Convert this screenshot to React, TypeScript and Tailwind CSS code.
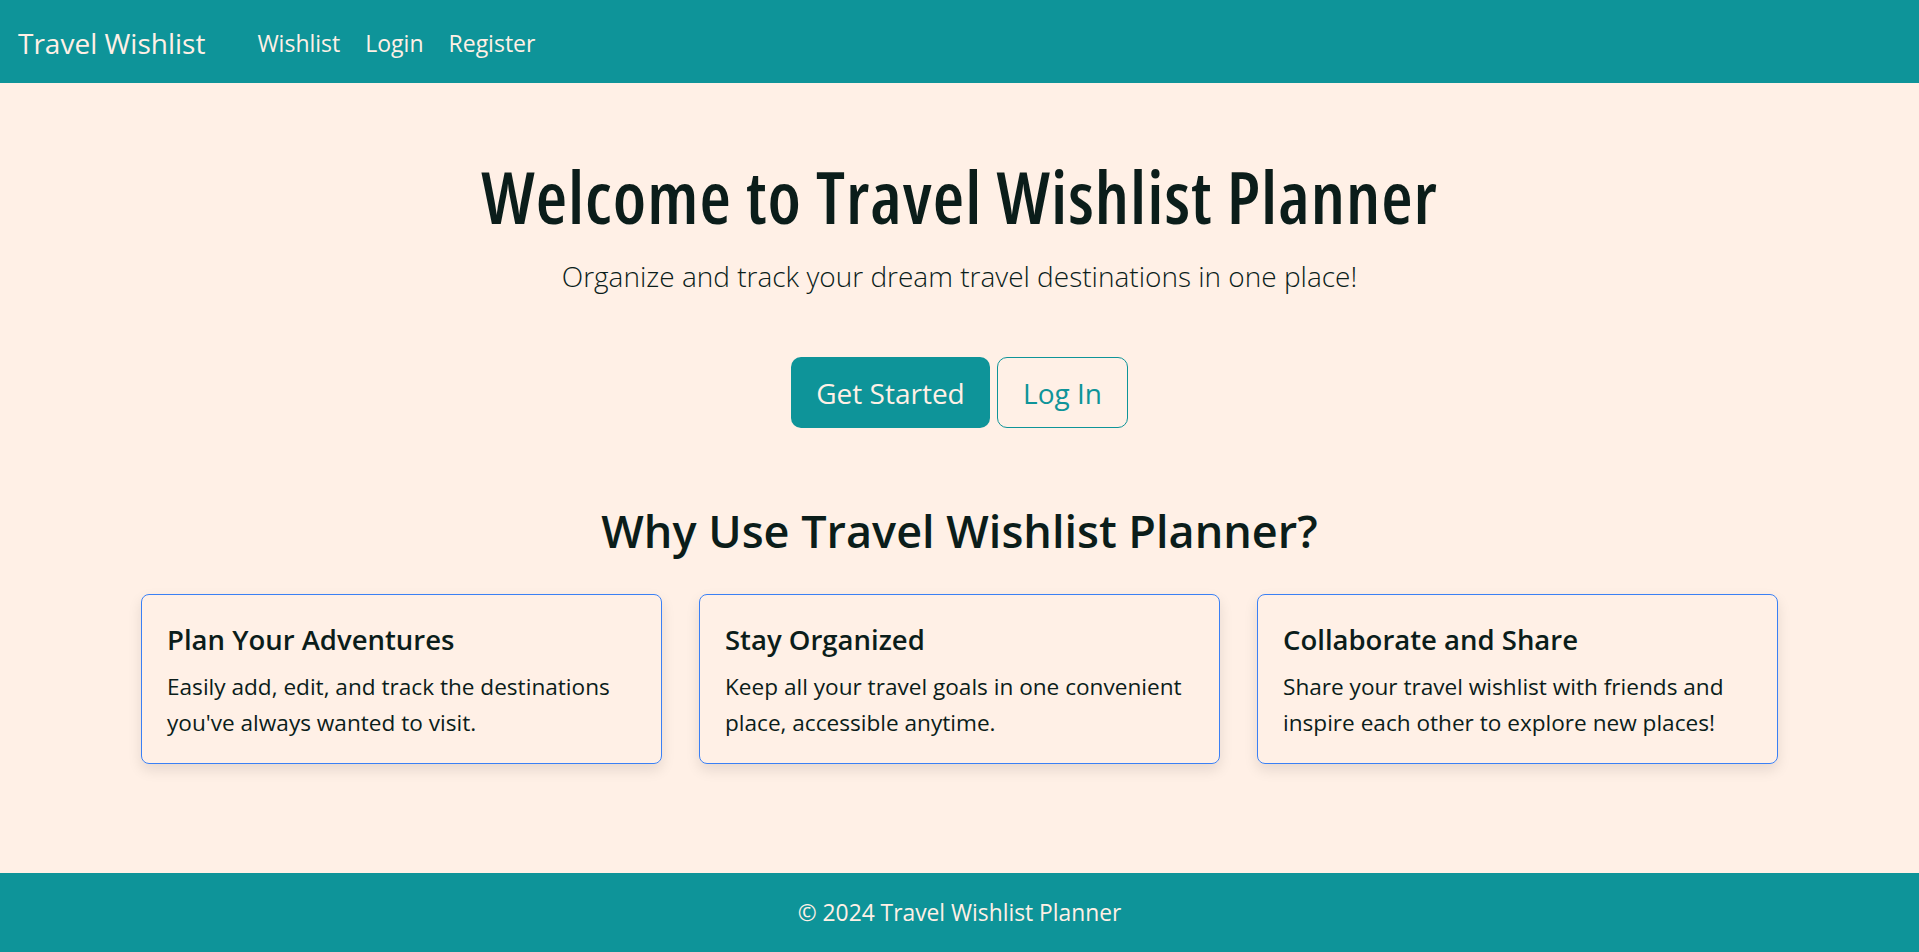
import React from 'react';

const features = [
  {
    title: 'Plan Your Adventures',
    text: "Easily add, edit, and track the destinations you've always wanted to visit.",
  },
  {
    title: 'Stay Organized',
    text: 'Keep all your travel goals in one convenient place, accessible anytime.',
  },
  {
    title: 'Collaborate and Share',
    text: 'Share your travel wishlist with friends and inspire each other to explore new places!',
  },
];

const App: React.FC = () => {
  return (
    <div className="min-h-screen flex flex-col bg-[#fff0e6] text-[#0b1d1a] font-['Open_Sans',sans-serif]">
      {/* navbar */}
      <header className="h-[83px] flex items-center bg-[#0e9499] px-[18px] pt-[3px] text-[#fff0e6]">
        <a href="#" className="text-[28px] mr-[52px]">Travel Wishlist</a>
        <nav>
          <ul className="flex items-center gap-[25px] text-[23px]">
            <li><a href="#">Wishlist</a></li>
            <li><a href="#">Login</a></li>
            <li><a href="#">Register</a></li>
          </ul>
        </nav>
      </header>

      <main className="flex-1 flex flex-col items-center text-center">
        <h1 className="mt-[72px] text-[72px] font-semibold font-stretch-condensed tracking-[1px] leading-[82px]">
          Welcome to Travel Wishlist Planner
        </h1>
        <p className="mt-[18px] text-[28px] font-light">Organize and track your dream travel destinations in one place!</p>

        <div className="mt-[60px] flex items-center gap-[7px]">
          <a href="#" className="h-[71px] w-[199px] flex items-center justify-center rounded-[10px] bg-[#0e9499] text-[#fff0e6] text-[28px]">
            Get Started
          </a>
          <a href="#" className="h-[71px] w-[131px] flex items-center justify-center rounded-[10px] border border-[#0e9499] text-[#0e9499] text-[28px]">
            Log In
          </a>
        </div>

        <h2 className="mt-[76px] text-[45px] font-semibold leading-[1.2]">Why Use Travel Wishlist Planner?</h2>

        <div className="mt-[36px] w-[1637px] grid grid-cols-3 gap-[37px] text-left">
          {features.map((f) => (
            <div
              key={f.title}
              className="h-[170px] rounded-[8px] border border-[#3a80f5] px-[25px] pt-[28px] shadow-[0_6px_14px_rgba(0,0,0,0.1)]"
            >
              <h5 className="text-[27.5px] font-semibold leading-[1.2]">{f.title}</h5>
              <p className="mt-[13px] text-[22.6px] leading-[36px]">{f.text}</p>
            </div>
          ))}
        </div>
      </main>

      <footer className="h-[79px] flex items-center justify-center bg-[#0e9499] pt-[2px] text-[#fff0e6] text-[22.8px]">
        © 2024 Travel Wishlist Planner
      </footer>
    </div>
  );
};

export default App;
